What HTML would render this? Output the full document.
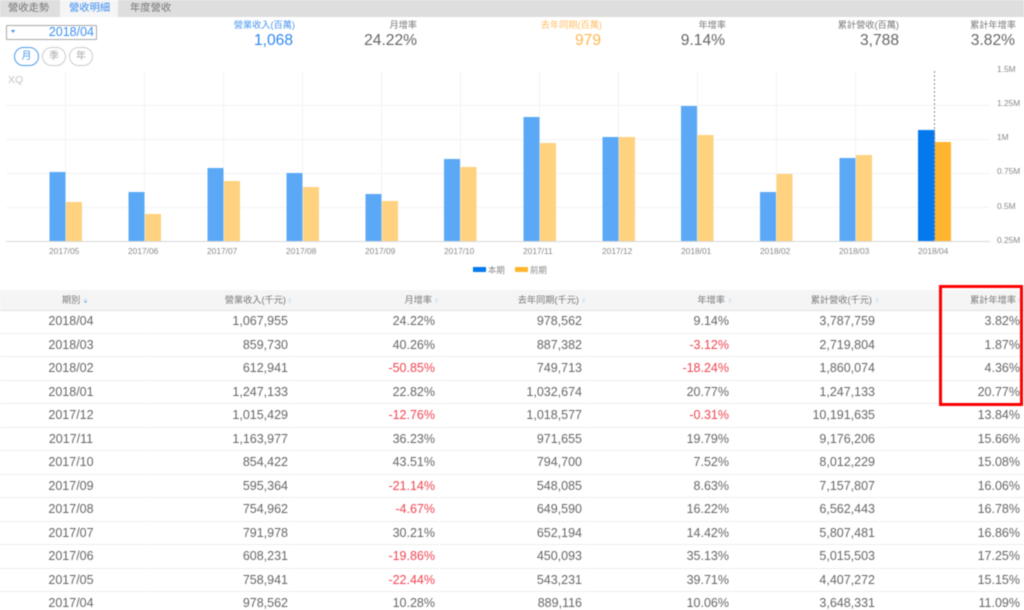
<!DOCTYPE html>
<html lang="zh-Hant"><head><meta charset="utf-8"><title>營收明細</title>
<style>
html,body{margin:0;padding:0;background:#fff}
body{width:1024px;height:610px;overflow:hidden;position:relative;font-family:"Liberation Sans","Noto Sans CJK TC",sans-serif;color:#666}
#w{position:absolute;left:0;top:0;width:1024px;height:610px;overflow:hidden;filter:blur(.4px)}
.a{position:absolute;white-space:nowrap}
.tabs{left:0;top:0;width:1024px;height:17px;background:#dedede}
.tab{top:2px;font-size:10.3px;line-height:13px;color:#777}
.l{font-size:9.2px;line-height:14px;top:18px;text-align:right}
.v{font-size:15.6px;line-height:18px;top:32px;text-align:right}
.p{top:47px;height:17px;border:1px solid #ccc;border-radius:10px;font-size:10px;line-height:17px;text-align:center;color:#aaa;background:#fff}
.ax{font-size:8.4px;line-height:10px;color:#888}
.hd{left:0;top:290px;width:1024px;height:20px;background:#f5f5f5;border-bottom:1px solid #e2e2e2}
.h{top:293px;font-size:9.2px;line-height:14px;color:#777}
.r{position:absolute;left:0;width:1024px;height:23.5px;box-sizing:border-box;border-bottom:1.5px solid #ececec;font-size:12.5px;line-height:22px;color:#666}
.r span{position:absolute;top:0;white-space:nowrap}
.r span:nth-child(1){left:21px;width:100px;text-align:center}
.r span:nth-child(2){right:736px}
.r span:nth-child(3){right:589px}
.r span:nth-child(4){right:442px}
.r span:nth-child(5){right:295px}
.r span:nth-child(6){right:149px}
.r span:nth-child(7){right:4px}
.r .n{color:#ee4450}
</style></head><body><div id="w">

<div class="a tabs"></div>
<div class="a" style="left:60px;top:0;width:58px;height:17px;background:#f5f5f5"></div>
<div class="a tab" style="left:8px">營收走勢</div>
<div class="a tab" style="left:69px;color:#3d8ff0">營收明細</div>
<div class="a tab" style="left:130px">年度營收</div>

<div class="a" style="left:6px;top:25px;width:89px;height:13px;border:1px solid #a8a8a8;border-radius:1px"></div>
<div class="a" style="left:11px;top:30px;width:0;height:0;border-left:2px solid transparent;border-right:2px solid transparent;border-top:3px solid #3d8ff0"></div>
<div class="a" style="right:930px;top:25px;font-size:12.5px;line-height:15px;color:#3d8ff0">2018/04</div>
<div class="a p" style="left:14px;width:23px;border-color:#4a9bf0;color:#4a9bf0">月</div>
<div class="a p" style="left:42px;width:22px">季</div>
<div class="a p" style="left:69px;width:22px">年</div>

<div class="a l" style="right:729px;color:#4a96ef">營業收入(百萬)</div>
<div class="a v" style="right:731px;color:#2f88ef">1,068</div>
<div class="a l" style="right:607px;color:#777">月增率</div>
<div class="a v" style="right:607px">24.22%</div>
<div class="a l" style="right:422px;color:#ffbe66">去年同期(百萬)</div>
<div class="a v" style="right:423px;color:#ffb650">979</div>
<div class="a l" style="right:298px;color:#777">年增率</div>
<div class="a v" style="right:299px">9.14%</div>
<div class="a l" style="right:125px;color:#777">累計營收(百萬)</div>
<div class="a v" style="right:125px">3,788</div>
<div class="a l" style="right:8px;color:#777">累計年增率</div>
<div class="a v" style="right:9px">3.82%</div>

<div class="a" style="left:8px;top:74px;font-size:10.5px;line-height:13px;color:#c4c4c4">XQ</div>

<svg class="a" style="left:0;top:0" width="1024" height="285" viewBox="0 0 1024 285">
<g stroke="#f4f4f4" stroke-width="1">
<path d="M6 105.5H990M6 139.5H990M6 173.5H990M6 207.5H990"/>
<path d="M65.5 71V241M144.5 71V241M223.5 71V241M302.5 71V241M381.5 71V241M460.500 71V241M539.5 71V241M618.5 71V241M697.5 71V241M776.5 71V241M855.5 71V241"/>
</g>
<g fill="#5ba9f6">
<rect x="49.5" y="172" width="16" height="69"/><rect x="128.5" y="192" width="16" height="49"/>
<rect x="207.5" y="168" width="16" height="73"/><rect x="286.5" y="173" width="16" height="68"/>
<rect x="365.5" y="194" width="16" height="47"/><rect x="444" y="159" width="16" height="82"/>
<rect x="523.5" y="117" width="16" height="124"/><rect x="602.5" y="137" width="16" height="104"/>
<rect x="681" y="106" width="16" height="135"/><rect x="760" y="192" width="16" height="49"/>
<rect x="839.5" y="158" width="16" height="83"/>
</g>
<g fill="#ffd280">
<rect x="66" y="202" width="16" height="39"/><rect x="145" y="214" width="16" height="27"/>
<rect x="224" y="181" width="16" height="60"/><rect x="303" y="187" width="16" height="54"/>
<rect x="382" y="201" width="16" height="40"/><rect x="460.500" y="167" width="16" height="74"/>
<rect x="540" y="143" width="16" height="98"/><rect x="619" y="137" width="16" height="104"/>
<rect x="697.5" y="135" width="16" height="106"/><rect x="776.5" y="174" width="16" height="67"/>
<rect x="856" y="155" width="16" height="86"/>
</g>
<rect x="918" y="130" width="17" height="111" fill="#0479ee"/>
<rect x="935" y="142" width="16" height="99" fill="#ffb52f"/>
<path d="M934.5 71V241" stroke="#9a9aa8" stroke-width="1.2" stroke-dasharray="2 2" fill="none"/>
<path d="M6 241.5H990" stroke="#d8d8d8" stroke-width="1"/>
<rect x="473" y="267" width="13" height="5" fill="#0479ee"/>
<rect x="515" y="267" width="13" height="5" fill="#ffb52f"/>
</svg>

<div class="a ax" style="left:997px;top:64px">1.5M</div>
<div class="a ax" style="left:997px;top:98px">1.25M</div>
<div class="a ax" style="left:997px;top:132px">1M</div>
<div class="a ax" style="left:997px;top:166px">0.75M</div>
<div class="a ax" style="left:997px;top:200.5px">0.5M</div>
<div class="a ax" style="left:997px;top:235px">0.25M</div>

<div class="a ax" style="left:49px;top:246px">2017/05</div>
<div class="a ax" style="left:128px;top:246px">2017/06</div>
<div class="a ax" style="left:207px;top:246px">2017/07</div>
<div class="a ax" style="left:286px;top:246px">2017/08</div>
<div class="a ax" style="left:365px;top:246px">2017/09</div>
<div class="a ax" style="left:444px;top:246px">2017/10</div>
<div class="a ax" style="left:523px;top:246px">2017/11</div>
<div class="a ax" style="left:602px;top:246px">2017/12</div>
<div class="a ax" style="left:681px;top:246px">2018/01</div>
<div class="a ax" style="left:760px;top:246px">2018/02</div>
<div class="a ax" style="left:839px;top:246px">2018/03</div>
<div class="a ax" style="left:918px;top:246px">2018/04</div>
<div class="a ax" style="left:488px;top:265px">本期</div>
<div class="a ax" style="left:530px;top:265px">前期</div>

<div class="a hd"></div>
<div class="a h" style="left:62px">期別</div>
<div class="a h" style="right:738px">營業收入(千元)</div>
<div class="a h" style="right:592px">月增率</div>
<div class="a h" style="right:445px">去年同期(千元)</div>
<div class="a h" style="right:299px">年增率</div>
<div class="a h" style="right:152px">累計營收(千元)</div>
<div class="a h" style="right:8px">累計年增率</div>
<svg class="a" style="left:0;top:290px" width="1024" height="20" viewBox="0 0 1024 20">
<g fill="#cfe2f3">
<path d="M83.500 10L85.500 8L87.500 10Z"/>
<path d="M287.500 10L289.500 8L291.500 10ZM287.500 11L289.500 13L291.500 11Z"/>
<path d="M434.500 10L436.500 8L438.500 10ZM434.500 11L436.500 13L438.500 11Z"/>
<path d="M581.500 10L583.500 8L585.500 10ZM581.500 11L583.500 13L585.500 11Z"/>
<path d="M728 10L730 8L732 10ZM728 11L730 13L732 11Z"/>
<path d="M875 10L877 8L879 10ZM875 11L877 13L879 11Z"/>
<path d="M1017.500 10L1019.500 8L1021.500 10ZM1017.500 11L1019.500 13L1021.500 11Z"/>
</g>
<path d="M83.500 11L85.500 13L87.500 11Z" fill="#6aa9e8"/>
</svg>

<div class="r" style="top:310px"><span>2018/04</span><span>1,067,955</span><span>24.22%</span><span>978,562</span><span>9.14%</span><span>3,787,759</span><span>3.82%</span></div>
<div class="r" style="top:333.5px"><span>2018/03</span><span>859,730</span><span>40.26%</span><span>887,382</span><span class="n">-3.12%</span><span>2,719,804</span><span>1.87%</span></div>
<div class="r" style="top:357px"><span>2018/02</span><span>612,941</span><span class="n">-50.85%</span><span>749,713</span><span class="n">-18.24%</span><span>1,860,074</span><span>4.36%</span></div>
<div class="r" style="top:380.500px"><span>2018/01</span><span>1,247,133</span><span>22.82%</span><span>1,032,674</span><span>20.77%</span><span>1,247,133</span><span>20.77%</span></div>
<div class="r" style="top:404px"><span>2017/12</span><span>1,015,429</span><span class="n">-12.76%</span><span>1,018,577</span><span class="n">-0.31%</span><span>10,191,635</span><span>13.84%</span></div>
<div class="r" style="top:427.500px"><span>2017/11</span><span>1,163,977</span><span>36.23%</span><span>971,655</span><span>19.79%</span><span>9,176,206</span><span>15.66%</span></div>
<div class="r" style="top:451px"><span>2017/10</span><span>854,422</span><span>43.51%</span><span>794,700</span><span>7.52%</span><span>8,012,229</span><span>15.08%</span></div>
<div class="r" style="top:474.500px"><span>2017/09</span><span>595,364</span><span class="n">-21.14%</span><span>548,085</span><span>8.63%</span><span>7,157,807</span><span>16.06%</span></div>
<div class="r" style="top:498px"><span>2017/08</span><span>754,962</span><span class="n">-4.67%</span><span>649,590</span><span>16.22%</span><span>6,562,443</span><span>16.78%</span></div>
<div class="r" style="top:521.500px"><span>2017/07</span><span>791,978</span><span>30.21%</span><span>652,194</span><span>14.42%</span><span>5,807,481</span><span>16.86%</span></div>
<div class="r" style="top:545px"><span>2017/06</span><span>608,231</span><span class="n">-19.86%</span><span>450,093</span><span>35.13%</span><span>5,015,503</span><span>17.25%</span></div>
<div class="r" style="top:568.500px"><span>2017/05</span><span>758,941</span><span class="n">-22.44%</span><span>543,231</span><span>39.71%</span><span>4,407,272</span><span>15.15%</span></div>
<div class="r" style="top:592px"><span>2017/04</span><span>978,562</span><span>10.28%</span><span>889,116</span><span>10.06%</span><span>3,648,331</span><span>11.09%</span></div>

<svg class="a" style="left:0;top:311px" width="1024" height="299" viewBox="0 0 1024 299">
<path d="M146 0V299M293 0V299M439 0V299M586 0V299M732 0V299M879 0V299" stroke="#fff" stroke-width="1"/>
</svg>

<div class="a" style="left:939px;top:285px;width:78px;height:115px;border:3px solid #f00"></div>
</div></body></html>
